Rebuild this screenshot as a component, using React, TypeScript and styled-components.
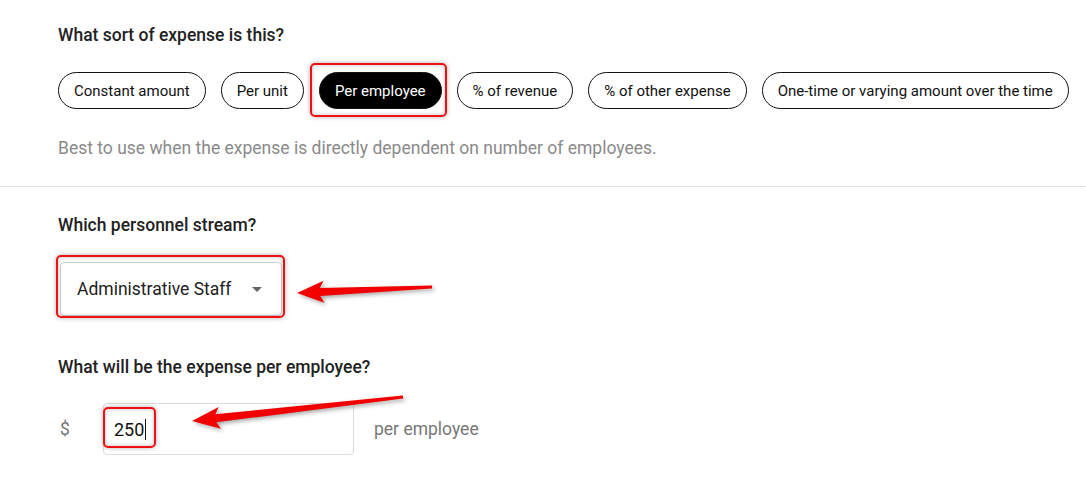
import React from "react";
import styled, { createGlobalStyle } from "styled-components";

const GlobalStyle = createGlobalStyle`
  html, body {
    margin: 0;
    padding: 0;
    background: #fff;
  }
  body {
    font-family: Roboto, "Liberation Sans", Arial, sans-serif;
    color: #222;
  }
`;

const Page = styled.div`
  position: relative;
  width: 1086px;
  height: 497px;
  overflow: hidden;
  background: #fff;
`;

const Section = styled.section<{ $divider?: boolean }>`
  padding: ${(p) => (p.$divider ? "23px 58px 26px" : "26px 58px 0")};
  border-bottom: ${(p) => (p.$divider ? "1px solid #e2e2e2" : "none")};
`;

const Question = styled.h3<{ $top?: number; $bottom?: number }>`
  margin: ${(p) => p.$top ?? 0}px 0 ${(p) => p.$bottom ?? 25}px;
  font-size: 17.5px;
  line-height: 24px;
  font-weight: 500;
  color: #222;
`;

const PillRow = styled.div`
  display: flex;
  gap: 15px;
`;

const PillWrap = styled.div`
  position: relative;
`;

const Pill = styled.button<{ $active?: boolean }>`
  height: 37px;
  padding: 0 15px;
  border-radius: 19px;
  border: 1px solid #111;
  background: ${(p) => (p.$active ? "#000" : "#fff")};
  color: ${(p) => (p.$active ? "#fff" : "#111")};
  font-family: Roboto, "Liberation Sans", Arial, sans-serif;
  font-size: 15px;
  white-space: nowrap;
  cursor: pointer;
`;

const Hint = styled.p`
  margin: 27px 0 0;
  font-size: 17.5px;
  line-height: 24px;
  color: #8a8a8a;
`;

const SelectWrap = styled.div`
  position: relative;
  width: 222px;
  margin-left: 2px;
`;

const Select = styled.div`
  box-sizing: border-box;
  height: 54px;
  display: flex;
  align-items: center;
  justify-content: space-between;
  padding: 0 19px 0 16px;
  border: 1px solid #cfcfcf;
  border-radius: 4px;
  background: #fff;
  font-size: 17.5px;
  color: #222;
`;

const Caret = styled.span`
  width: 0;
  height: 0;
  border-left: 5px solid transparent;
  border-right: 5px solid transparent;
  border-top: 5px solid #666;
`;

const AmountRow = styled.div`
  display: flex;
  align-items: center;
  margin-top: 24px;
`;

const Prefix = styled.span`
  width: 45px;
  padding-left: 2px;
  box-sizing: border-box;
  font-size: 17.5px;
  color: #777;
`;

const InputBox = styled.div`
  position: relative;
  box-sizing: border-box;
  width: 251px;
  height: 52px;
  display: flex;
  align-items: center;
  padding-left: 10px;
  border: 1px solid #dcdcdc;
  border-radius: 4px;
  font-size: 18px;
  color: #111;
`;

const Cursor = styled.span`
  display: inline-block;
  width: 1px;
  height: 21px;
  margin-left: 1px;
  background: #111;
`;

const Suffix = styled.span`
  margin-left: 20px;
  font-size: 17.5px;
  color: #777;
`;

// red annotation frame laid over a control
const Highlight = styled.div<{ $t: number; $r: number; $b: number; $l: number }>`
  position: absolute;
  top: ${(p) => p.$t}px;
  right: ${(p) => p.$r}px;
  bottom: ${(p) => p.$b}px;
  left: ${(p) => p.$l}px;
  border: 2px solid #f01010;
  border-radius: 5px;
  box-shadow: 0 0 5px rgba(0, 0, 0, 0.3), inset 0 0 4px rgba(0, 0, 0, 0.25);
  pointer-events: none;
`;

const Overlay = styled.svg`
  position: absolute;
  top: 0;
  left: 0;
  pointer-events: none;
  filter: drop-shadow(2px 2px 2px rgba(0, 0, 0, 0.35));
`;

const kinds = [
  "Constant amount",
  "Per unit",
  "Per employee",
  "% of revenue",
  "% of other expense",
  "One-time or varying amount over the time",
];

export default function App() {
  return (
    <Page>
      <GlobalStyle />
      <Section $divider>
        <Question>What sort of expense is this?</Question>
        <PillRow>
          {kinds.map((k) => (
            <PillWrap key={k}>
              <Pill $active={k === "Per employee"}>{k}</Pill>
              {k === "Per employee" && <Highlight $t={-9} $r={-5} $b={-8} $l={-9} />}
            </PillWrap>
          ))}
        </PillRow>
        <Hint>Best to use when the expense is directly dependent on number of employees.</Hint>
      </Section>

      <Section>
        <Question>Which personnel stream?</Question>
        <SelectWrap>
          <Select>
            Administrative Staff
            <Caret />
          </Select>
          <Highlight $t={-7} $r={-3} $b={-2} $l={-4} />
        </SelectWrap>

        <Question $top={39} $bottom={0}>
          What will be the expense per employee?
        </Question>
        <AmountRow>
          <Prefix>$</Prefix>
          <InputBox>
            250
            <Cursor />
            <Highlight $t={3} $r={197} $b={6} $l={-1} />
          </InputBox>
          <Suffix>per employee</Suffix>
        </AmountRow>
      </Section>

      <Overlay width={1086} height={497} viewBox="0 0 1086 497">
        <polygon
          fill="#f20000"
          points="297,293 323.5,280.8 319.8,288 432,285.5 432,288.5 320.2,296 324.5,302.8"
        />
        <polygon
          fill="#f20000"
          points="192,421 218.6,406.9 215.4,414.3 402.8,395.5 403.2,398.5 216.3,422.3 221,428.7"
        />
      </Overlay>
    </Page>
  );
}
